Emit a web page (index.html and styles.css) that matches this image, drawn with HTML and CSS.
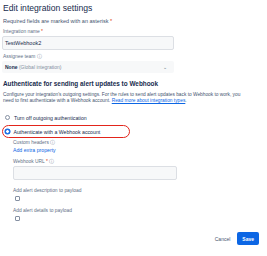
FILE: index.html
```html
<!DOCTYPE html>
<html lang="en">
<head>
  <meta charset="UTF-8">
  <title>Edit integration settings</title>
  <link rel="stylesheet" href="styles.css">
</head>
<body>
  <div class="page">
    <h1>Edit integration settings</h1>
    <p class="note">Required fields are marked with an asterisk <span class="req">*</span></p>

    <!-- Integration name -->
    <label class="field-label">Integration name <span class="req">*</span></label>
    <div class="input">TestWebhook2</div>

    <!-- Assignee team -->
    <label class="field-label">Assignee team <span class="info">&#9432;</span></label>
    <div class="select">
      <span><b>None</b> <span class="muted">(Global integration)</span></span>
      <span class="chev">&#8964;</span>
    </div>

    <h2>Authenticate for sending alert updates to Webhook</h2>
    <p class="desc">Configure your integration's outgoing settings. For the rules to send alert updates back to Webhook to work, you<br>need to first authenticate with a Webhook account. <a href="#">Read more about integration types</a>.</p>

    <!-- Auth options -->
    <div class="radio-row">
      <span class="radio"></span>
      <span>Turn off outgoing authentication</span>
    </div>
    <div class="radio-row marked">
      <span class="radio checked"></span>
      <span>Authenticate with a Webhook account</span>
    </div>

    <div class="sub">
      <label class="field-label">Custom headers <span class="info">&#9432;</span></label>
      <a href="#" class="add-link">Add extra property</a>

      <label class="field-label">Webhook URL <span class="req">*</span> <span class="info">&#9432;</span></label>
      <div class="input url"></div>

      <label class="field-label">Add alert description to payload</label>
      <span class="check"></span>

      <label class="field-label">Add alert details to payload</label>
      <span class="check"></span>
    </div>

    <div class="actions">
      <button class="cancel">Cancel</button>
      <button class="save">Save</button>
    </div>
  </div>
</body>
</html>
```

FILE: styles.css
```css
body {
  margin: 0;
  font-family: "Liberation Sans", Arial, sans-serif;
  color: #172b4d;
  background: #fff;
}

.page {
  padding: 3px 3px 0 3px;
  width: 256px;
}

h1 {
  font-size: 8.6px;
  font-weight: normal;
  margin: 0 0 5px 0;
  line-height: 10px;
}

.note {
  font-size: 5.5px;
  margin: 0 0 5px 0;
  line-height: 6px;
  color: #44546f;
}

.req {
  color: #de350b;
}

.info {
  font-size: 4.5px;
  color: #8590a2;
}

.field-label {
  display: block;
  font-size: 4.9px;
  line-height: 6px;
  color: #626f86;
  margin-bottom: 1px;
}

.input {
  box-sizing: border-box;
  width: 172px;
  height: 14px;
  margin-left: -1px;
  border: 1px solid #dcdfe4;
  border-radius: 2px;
  background: #f7f8f9;
  font-size: 5.5px;
  line-height: 12px;
  padding: 0 2px;
  margin-bottom: 4px;
}

.select {
  box-sizing: border-box;
  width: 172px;
  height: 12px;
  margin-left: -1px;
  border-radius: 2px;
  background: #f7f8f9;
  font-size: 5px;
  padding: 0 7px 0 3px;
  display: flex;
  justify-content: space-between;
  align-items: center;
  margin-bottom: 7px;
}

.muted {
  color: #8590a2;
}

.chev {
  font-size: 5px;
  color: #626f86;
}

h2 {
  font-size: 6.4px;
  margin: 0 0 4px 0;
  line-height: 8px;
}

.desc {
  font-size: 4.8px;
  line-height: 6.2px;
  margin: 0 0 7.6px 0;
  color: #44546f;
}

.desc a,
.add-link {
  color: #0c66e4;
}

.radio-row {
  display: flex;
  align-items: center;
  gap: 4px;
  font-size: 5.2px;
  height: 11px;
  padding-left: 2px;
}

.radio-row.marked {
  box-sizing: border-box;
  border: 1.5px solid #e2251b;
  border-radius: 7px;
  width: 128px;
  height: 13px;
  margin: 2px 0 0 -1px;
  padding-left: 1.5px;
}

.radio {
  box-sizing: border-box;
  width: 5px;
  height: 5px;
  border-radius: 50%;
  border: 1px solid #8590a2;
}

.radio.checked {
  border: 1.5px solid #0c66e4;
  background: #fff;
  box-shadow: 0 0 0 0.5px #0c66e4;
}

.sub {
  padding-left: 10px;
  padding-top: 2px;
}

.add-link {
  display: block;
  font-size: 5.2px;
  line-height: 7px;
  text-decoration: none;
  margin-bottom: 5px;
}

.input.url {
  width: 164px;
  margin-left: 0;
  margin-bottom: 8px;
}

.check {
  display: block;
  box-sizing: border-box;
  width: 5px;
  height: 5px;
  border: 1px solid #8590a2;
  border-radius: 1px;
  margin: 2px 0 7px 2px;
}

.actions {
  display: flex;
  justify-content: flex-end;
  align-items: center;
  gap: 2px;
  margin-top: 11px;
  padding-right: 0;
}

.actions button {
  font-family: inherit;
  font-size: 5px;
  border: none;
  border-radius: 2px;
  height: 13px;
  padding: 0 5px;
  cursor: pointer;
}

.cancel {
  background: none;
  color: #44546f;
}

.save {
  background: #0c66e4;
  color: #fff;
  font-weight: bold;
}
```
